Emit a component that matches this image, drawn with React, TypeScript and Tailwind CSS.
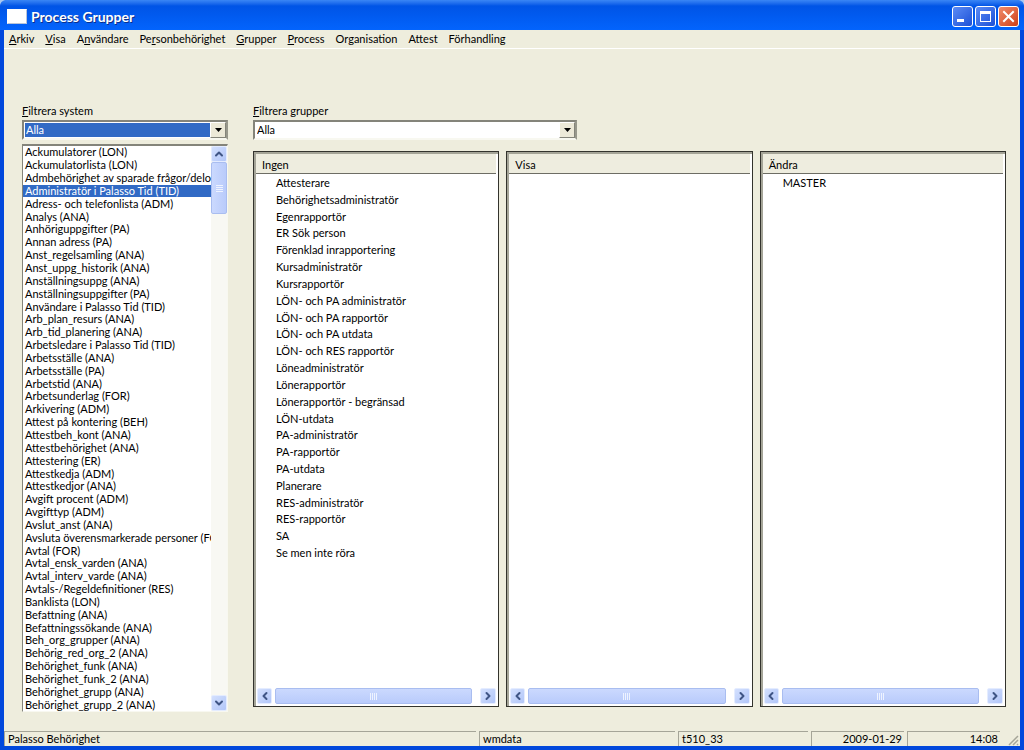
import React, { useState } from 'react'
import { ChevronDown, ChevronLeft, ChevronRight, ChevronUp } from 'lucide-react'

interface MenuItem {
    label: string;
    // index of the underlined access key, -1 when the item has none
    hotkey: number;
}

interface Group {
    title: string;
    items: string[];
}

const MENU: MenuItem[] = [
    { label: 'Arkiv', hotkey: 0 },
    { label: 'Visa', hotkey: 0 },
    { label: 'Användare', hotkey: 1 },
    { label: 'Personbehörighet', hotkey: 2 },
    { label: 'Grupper', hotkey: 0 },
    { label: 'Process', hotkey: 0 },
    { label: 'Organisation', hotkey: -1 },
    { label: 'Attest', hotkey: -1 },
    { label: 'Förhandling', hotkey: -1 },
];

const SYSTEMS = [
    'Ackumulatorer (LON)',
    'Ackumulatorlista (LON)',
    'Admbehörighet av sparade frågor/delor',
    'Administratör i Palasso Tid (TID)',
    'Adress- och telefonlista (ADM)',
    'Analys (ANA)',
    'Anhöriguppgifter (PA)',
    'Annan adress (PA)',
    'Anst_regelsamling (ANA)',
    'Anst_uppg_historik (ANA)',
    'Anställningsuppg (ANA)',
    'Anställningsuppgifter (PA)',
    'Användare i Palasso Tid (TID)',
    'Arb_plan_resurs (ANA)',
    'Arb_tid_planering (ANA)',
    'Arbetsledare i Palasso Tid (TID)',
    'Arbetsställe (ANA)',
    'Arbetsställe (PA)',
    'Arbetstid (ANA)',
    'Arbetsunderlag (FOR)',
    'Arkivering (ADM)',
    'Attest på kontering (BEH)',
    'Attestbeh_kont (ANA)',
    'Attestbehörighet (ANA)',
    'Attestering (ER)',
    'Attestkedja (ADM)',
    'Attestkedjor (ANA)',
    'Avgift procent (ADM)',
    'Avgifttyp (ADM)',
    'Avslut_anst (ANA)',
    'Avsluta överensmarkerade personer (FO',
    'Avtal (FOR)',
    'Avtal_ensk_varden (ANA)',
    'Avtal_interv_varde (ANA)',
    'Avtals-/Regeldefinitioner (RES)',
    'Banklista (LON)',
    'Befattning (ANA)',
    'Befattningssökande (ANA)',
    'Beh_org_grupper (ANA)',
    'Behörig_red_org_2 (ANA)',
    'Behörighet_funk (ANA)',
    'Behörighet_funk_2 (ANA)',
    'Behörighet_grupp (ANA)',
    'Behörighet_grupp_2 (ANA)',
];

const GROUPS: Group[] = [
    {
        title: 'Ingen',
        items: [
            'Attesterare',
            'Behörighetsadministratör',
            'Egenrapportör',
            'ER Sök person',
            'Förenklad inrapportering',
            'Kursadministratör',
            'Kursrapportör',
            'LÖN- och PA administratör',
            'LÖN- och PA rapportör',
            'LÖN- och PA utdata',
            'LÖN- och RES rapportör',
            'Löneadministratör',
            'Lönerapportör',
            'Lönerapportör - begränsad',
            'LÖN-utdata',
            'PA-administratör',
            'PA-rapportör',
            'PA-utdata',
            'Planerare',
            'RES-administratör',
            'RES-rapportör',
            'SA',
            'Se men inte röra',
        ],
    },
    { title: 'Visa', items: [] },
    { title: 'Ändra', items: ['MASTER'] },
];

const scrollButton = 'flex shrink-0 items-center justify-center rounded-xs border border-[#e4ecff] bg-linear-to-br from-[#d3e0fe] to-[#b2c6f8] text-[#3f5585]';

function AccessKey({ label, hotkey }: MenuItem) {
    if (hotkey < 0) return <>{label}</>;
    return (
        <>
            {label.slice(0, hotkey)}
            <span className="underline underline-offset-1">{label[hotkey]}</span>
            {label.slice(hotkey + 1)}
        </>
    )
}

function TitleBar() {
    const button = 'flex size-[21px] items-center justify-center rounded-[3px] border border-white';
    return (
        <header className="flex h-[30px] shrink-0 items-center rounded-t-md bg-linear-to-b from-[#3a86f5] via-[#0054e6] via-20% to-[#0364fd] px-[7px] pt-[3px]">
            <span className="h-[15px] w-5 border border-r-[#b9c4d8] border-b-[#b9c4d8] border-white bg-white" />
            <h1 className="ml-1 font-[Lato,sans-serif] text-[14px] leading-4 font-bold text-white [text-shadow:1px_1px_#0a2f8c]">
                Process Grupper
            </h1>
            <div className="-mr-[2px] ml-auto flex gap-[2px]">
                <button aria-label="Minimera" className={`${button} bg-linear-to-br from-[#5b8bf5] to-[#1c4fd6]`}>
                    <svg viewBox="0 0 19 19" className="size-[19px]"><path d="M4 12h7v3H4z" fill="#fff" /></svg>
                </button>
                <button aria-label="Maximera" className={`${button} bg-linear-to-br from-[#5b8bf5] to-[#1c4fd6]`}>
                    <svg viewBox="0 0 19 19" className="size-[19px]">
                        <path d="M4 4h11v11H4zM5 7v7h9V7z" fill="#fff" fillRule="evenodd" />
                    </svg>
                </button>
                <button aria-label="Stäng" className={`${button} bg-linear-to-br from-[#f08a68] to-[#cf3d12]`}>
                    <svg viewBox="0 0 19 19" className="size-[19px]">
                        <path d="M5 5l9 9M14 5l-9 9" stroke="#fff" strokeWidth="2" strokeLinecap="square" />
                    </svg>
                </button>
            </div>
        </header>
    )
}

function Combo({ id, label, focused }: { id: string; label: string; focused?: boolean }) {
    return (
        <div>
            <label htmlFor={id} className="block leading-[14px]">
                <AccessKey label={label} hotkey={0} />
            </label>
            <div className="relative mt-[2px] h-5 border-2 border-t-[#84847a] border-r-[#98988c] border-b-[#f8f8f0] border-l-[#84847a] bg-white p-px">
                <select
                    id={id}
                    className={`block h-full w-full appearance-none pl-px leading-[14px] outline-none ${focused ? 'bg-[#316ac5] text-white' : 'bg-white text-black'}`}
                >
                    <option>Alla</option>
                </select>
                <span className="pointer-events-none absolute inset-y-0 right-0 flex w-4 items-center justify-center border border-t-white border-r-[#84847a] border-b-[#84847a] border-l-white bg-[#ece9d8]">
                    <svg viewBox="0 0 7 4" className="h-1 w-[7px]"><path d="M0 0h7L3.5 4z" /></svg>
                </span>
            </div>
        </div>
    )
}

function SystemList() {
    const [selected, setSelected] = useState(3);

    return (
        <div className="mt-1 flex flex-1 border border-t-2 border-t-[#84847a] border-r-[#f8f8f0] border-b-[#f8f8f0] border-l-[#84847a] bg-white">
            <ul aria-label="System" className="flex min-w-0 flex-1 flex-col">
                {SYSTEMS.map((name, index) => (
                    <li key={name} className="flex min-h-0 flex-1">
                        <button
                            onClick={() => setSelected(index)}
                            aria-pressed={index === selected}
                            className={`w-full overflow-hidden pl-[2px] text-left leading-3 whitespace-nowrap ${index === selected ? 'bg-[#316ac5] text-white' : ''}`}
                        >
                            {name}
                        </button>
                    </li>
                ))}
            </ul>
            <div className="flex w-4 flex-col bg-[#f8f8f3]">
                <button aria-label="Rulla uppåt" className={`h-4 w-full ${scrollButton}`}>
                    <ChevronUp size={12} strokeWidth={4} />
                </button>
                <div className="flex h-[52px] flex-col items-center justify-center gap-px rounded-xs border border-[#a9bdf0] bg-linear-to-r from-[#cbd9fe] to-[#b9cbfb]">
                    {[0, 1, 2, 3].map(line => <span key={line} className="h-px w-[7px] bg-[#eef3ff]" />)}
                </div>
                <button aria-label="Rulla nedåt" className={`mt-auto h-4 w-full ${scrollButton}`}>
                    <ChevronDown size={12} strokeWidth={4} />
                </button>
            </div>
        </div>
    )
}

function GroupPanel({ title, items }: Group) {
    return (
        <section className="flex min-w-0 flex-1 flex-col border border-[#33332d] bg-white">
            <div className="flex flex-1 flex-col border-t-2 border-l-2 border-t-[#a5a598] border-l-[#a5a598]">
                <h2 className="mr-[2px] border-b border-[#6d6d64] bg-[#eeeddf] pt-[3px] pb-px pl-[6px] leading-[15px]">{title}</h2>
                {/* a full column of groups shares the height evenly */}
                <ul className={items.length > 1 ? 'flex h-[387px] flex-col' : ''}>
                    {items.map(item => (
                        <li key={item} className="flex min-h-0 flex-1 items-center pl-5 leading-[17px]">{item}</li>
                    ))}
                </ul>
                <div className="mt-auto mb-[2px] flex h-4 pr-[2px] pl-px">
                    <button aria-label="Rulla åt vänster" className={`w-[15px] ${scrollButton}`}>
                        <ChevronLeft size={12} strokeWidth={4} />
                    </button>
                    <div className="ml-[3px] flex flex-1 items-center justify-center gap-px rounded-xs border border-[#a9bdf0] bg-linear-to-b from-[#cbd9fe] to-[#b9cbfb]">
                        {[0, 1, 2, 3].map(line => <span key={line} className="h-[7px] w-px bg-[#eef3ff]" />)}
                    </div>
                    <button aria-label="Rulla åt höger" className={`ml-2 w-4 ${scrollButton}`}>
                        <ChevronRight size={12} strokeWidth={4} />
                    </button>
                </div>
            </div>
        </section>
    )
}

function StatusBar() {
    const cell = 'border-t border-l border-[#a5a598] pl-[3px] leading-[14px]';
    return (
        <footer className="flex h-[15px] gap-[3px]">
            <span className={`flex-1 ${cell}`}>Palasso Behörighet</span>
            <span className={`w-[196px] ${cell}`}>wmdata</span>
            <span className={`w-[130px] ${cell}`}>t510_33</span>
            <span className={`w-[93px] pr-[2px] text-right ${cell}`}>2009-01-29</span>
            <span className={`w-[93px] pr-[2px] text-right ${cell}`}>14:08</span>
            <svg viewBox="0 0 17 15" className="h-[15px] w-[17px]">
                <path d="M6 14l9-9M10 14l5-5M14 14l1-1" stroke="#a5a598" strokeWidth="1.5" />
            </svg>
        </footer>
    )
}

export default function App() {
    return (
        <div className="bg-[#a9c8f0] font-[Lato,'Liberation_Sans',sans-serif] text-[11px] text-black">
            <div className="flex min-h-screen flex-col rounded-t-lg bg-[#0148dc]">
                <TitleBar />
                <div className="mx-1 mb-1 flex flex-1 flex-col bg-[#eeeddd]">
                    <nav className="flex h-[19px] items-center gap-[11px] border-b border-white pl-[5px] leading-[14px]">
                        {MENU.map(item => (
                            <button key={item.label}>
                                <AccessKey {...item} />
                            </button>
                        ))}
                    </nav>
                    <main className="flex flex-1 gap-[25px] pt-[55px] pr-[14px] pb-[19px] pl-[18px]">
                        <div className="flex w-[206px] shrink-0 flex-col">
                            <Combo id="system" label="Filtrera system" focused />
                            <SystemList />
                        </div>
                        <div className="flex min-w-0 flex-1 flex-col">
                            <div className="w-[324px]">
                                <Combo id="grupper" label="Filtrera grupper" />
                            </div>
                            <div className="mt-[11px] mb-[5px] flex flex-1 gap-[7px]">
                                {GROUPS.map(group => <GroupPanel key={group.title} {...group} />)}
                            </div>
                        </div>
                    </main>
                    <StatusBar />
                </div>
            </div>
        </div>
    )
}
